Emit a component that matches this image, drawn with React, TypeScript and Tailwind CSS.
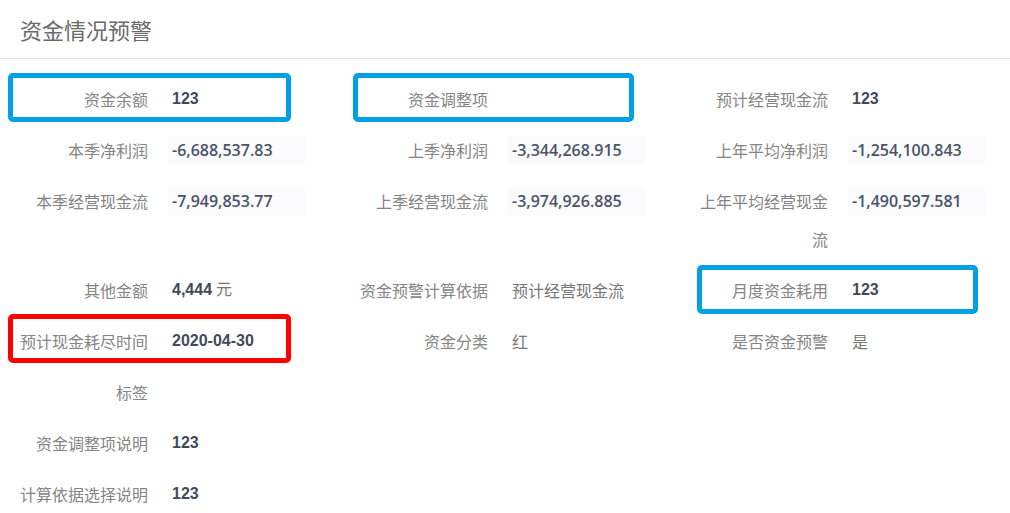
import React from 'react';

type Item = {
  label: string;
  value?: string;
  unit?: string;
  kind?: 'num' | 'input' | 'text';
};

const items: Item[] = [
  { label: '资金余额', value: '123', kind: 'num' },
  { label: '资金调整项' },
  { label: '预计经营现金流', value: '123', kind: 'num' },
  { label: '本季净利润', value: '-6,688,537.83', kind: 'input' },
  { label: '上季净利润', value: '-3,344,268.915', kind: 'input' },
  { label: '上年平均净利润', value: '-1,254,100.843', kind: 'input' },
  { label: '本季经营现金流', value: '-7,949,853.77', kind: 'input' },
  { label: '上季经营现金流', value: '-3,974,926.885', kind: 'input' },
  { label: '上年平均经营现金流', value: '-1,490,597.581', kind: 'input' },
  { label: '其他金额', value: '4,444', unit: '元', kind: 'num' },
  { label: '资金预警计算依据', value: '预计经营现金流', kind: 'text' },
  { label: '月度资金耗用', value: '123', kind: 'num' },
  { label: '预计现金耗尽时间', value: '2020-04-30', kind: 'num' },
  { label: '资金分类', value: '红', kind: 'text' },
  { label: '是否资金预警', value: '是', kind: 'text' },
  { label: '标签' },
  { label: '' },
  { label: '' },
  { label: '资金调整项说明', value: '123', kind: 'num' },
  { label: '' },
  { label: '' },
  { label: '计算依据选择说明', value: '123', kind: 'num' },
];

function Value({ item }: { item: Item }) {
  if (!item.value) return null;
  if (item.kind === 'input') {
    return (
      <span className="inline-flex h-7 w-[137px] items-center bg-[#fbfbfd] pl-1 font-['Open_Sans','Noto_Sans_CJK_SC',sans-serif] text-[16px] font-semibold leading-7 text-[#4b5467]">
        {item.value}
      </span>
    );
  }
  if (item.kind === 'text') {
    return <span className="pl-1 text-[#777]">{item.value}</span>;
  }
  return (
    <span className="pl-1 font-['Liberation_Sans','Noto_Sans_CJK_SC',sans-serif] font-bold text-[#414b5c]">
      {item.value}
      {item.unit && <span className="ml-1 font-normal text-[#777]">{item.unit}</span>}
    </span>
  );
}

export default function App() {
  return (
    <div className="relative h-[513px] w-[1010px] overflow-hidden bg-white font-['Noto_Sans_CJK_SC',sans-serif]">
      <div className="h-[59px] border-b border-[#e4e4e4] pl-5 pt-[14px] text-[22px] leading-[30px] text-[#6a6a6a]">
        资金情况预警
      </div>

      <div className="mt-[21px] grid grid-cols-[340px_340px_340px] gap-y-[13px]">
        {items.map((item, i) => (
          <div key={i} className="flex text-[16px] leading-[38px]">
            <div className="w-[160px] shrink-0 break-all pl-3 pr-3 text-right text-[#858585]">
              {item.label}
            </div>
            <div className="flex h-[38px] items-center pl-2">
              <Value item={item} />
            </div>
          </div>
        ))}
      </div>

      {/* annotation frames */}
      <div className="pointer-events-none absolute left-[8px] top-[73px] h-[49px] w-[283px] rounded-[5px] border-[5px] border-[#00a0e9]" />
      <div className="pointer-events-none absolute left-[353px] top-[73px] h-[49px] w-[281px] rounded-[5px] border-[5px] border-[#00a0e9]" />
      <div className="pointer-events-none absolute left-[697px] top-[265px] h-[49px] w-[281px] rounded-[5px] border-[5px] border-[#00a0e9]" />
      <div className="pointer-events-none absolute left-[8px] top-[314px] h-[49px] w-[283px] rounded-[5px] border-[5px] border-[#ff0000]" />
    </div>
  );
}
